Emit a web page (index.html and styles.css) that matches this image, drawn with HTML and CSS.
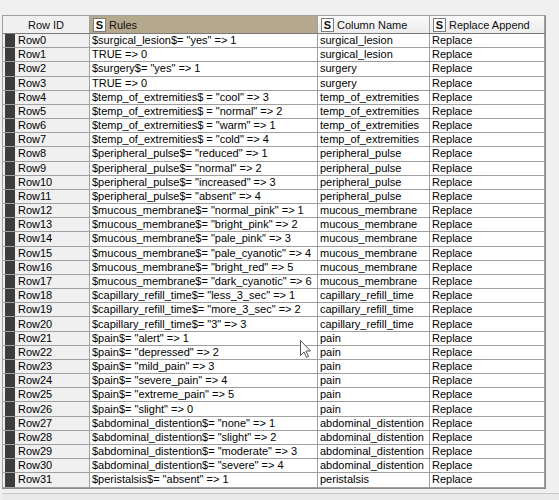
FILE: index.html
```html
<!DOCTYPE html>
<html>
<head>
<meta charset="utf-8">
<link rel="stylesheet" href="styles.css">
</head>
<body>
<div class="frame">
  <div class="table">
    <div class="row head">
      <div class="hc rowid-h">Row ID</div>
      <div class="hc sel"><span class="s">S</span>Rules</div>
      <div class="hc"><span class="s">S</span>Column Name</div>
      <div class="hc"><span class="s">S</span>Replace Append</div>
    </div>
    <div class="body">
      <div class="row"><div class="rid">Row0</div><div class="c">$surgical_lesion$= "yes" =&gt; 1</div><div class="c">surgical_lesion</div><div class="c">Replace</div></div>
      <div class="row"><div class="rid">Row1</div><div class="c">TRUE =&gt; 0</div><div class="c">surgical_lesion</div><div class="c">Replace</div></div>
      <div class="row"><div class="rid">Row2</div><div class="c">$surgery$= "yes" =&gt; 1</div><div class="c">surgery</div><div class="c">Replace</div></div>
      <div class="row"><div class="rid">Row3</div><div class="c">TRUE =&gt; 0</div><div class="c">surgery</div><div class="c">Replace</div></div>
      <div class="row"><div class="rid">Row4</div><div class="c">$temp_of_extremities$ = "cool" =&gt; 3</div><div class="c">temp_of_extremities</div><div class="c">Replace</div></div>
      <div class="row"><div class="rid">Row5</div><div class="c">$temp_of_extremities$ = "normal" =&gt; 2</div><div class="c">temp_of_extremities</div><div class="c">Replace</div></div>
      <div class="row"><div class="rid">Row6</div><div class="c">$temp_of_extremities$ = "warm" =&gt; 1</div><div class="c">temp_of_extremities</div><div class="c">Replace</div></div>
      <div class="row"><div class="rid">Row7</div><div class="c">$temp_of_extremities$ = "cold" =&gt; 4</div><div class="c">temp_of_extremities</div><div class="c">Replace</div></div>
      <div class="row"><div class="rid">Row8</div><div class="c">$peripheral_pulse$= "reduced" =&gt; 1</div><div class="c">peripheral_pulse</div><div class="c">Replace</div></div>
      <div class="row"><div class="rid">Row9</div><div class="c">$peripheral_pulse$= "normal" =&gt; 2</div><div class="c">peripheral_pulse</div><div class="c">Replace</div></div>
      <div class="row"><div class="rid">Row10</div><div class="c">$peripheral_pulse$= "increased" =&gt; 3</div><div class="c">peripheral_pulse</div><div class="c">Replace</div></div>
      <div class="row"><div class="rid">Row11</div><div class="c">$peripheral_pulse$= "absent" =&gt; 4</div><div class="c">peripheral_pulse</div><div class="c">Replace</div></div>
      <div class="row"><div class="rid">Row12</div><div class="c">$mucous_membrane$= "normal_pink" =&gt; 1</div><div class="c">mucous_membrane</div><div class="c">Replace</div></div>
      <div class="row"><div class="rid">Row13</div><div class="c">$mucous_membrane$= "bright_pink" =&gt; 2</div><div class="c">mucous_membrane</div><div class="c">Replace</div></div>
      <div class="row"><div class="rid">Row14</div><div class="c">$mucous_membrane$= "pale_pink" =&gt; 3</div><div class="c">mucous_membrane</div><div class="c">Replace</div></div>
      <div class="row"><div class="rid">Row15</div><div class="c">$mucous_membrane$= "pale_cyanotic" =&gt; 4</div><div class="c">mucous_membrane</div><div class="c">Replace</div></div>
      <div class="row"><div class="rid">Row16</div><div class="c">$mucous_membrane$= "bright_red" =&gt; 5</div><div class="c">mucous_membrane</div><div class="c">Replace</div></div>
      <div class="row"><div class="rid">Row17</div><div class="c">$mucous_membrane$= "dark_cyanotic" =&gt; 6</div><div class="c">mucous_membrane</div><div class="c">Replace</div></div>
      <div class="row"><div class="rid">Row18</div><div class="c">$capillary_refill_time$= "less_3_sec" =&gt; 1</div><div class="c">capillary_refill_time</div><div class="c">Replace</div></div>
      <div class="row"><div class="rid">Row19</div><div class="c">$capillary_refill_time$= "more_3_sec" =&gt; 2</div><div class="c">capillary_refill_time</div><div class="c">Replace</div></div>
      <div class="row"><div class="rid">Row20</div><div class="c">$capillary_refill_time$= "3" =&gt; 3</div><div class="c">capillary_refill_time</div><div class="c">Replace</div></div>
      <div class="row"><div class="rid">Row21</div><div class="c">$pain$= "alert" =&gt; 1</div><div class="c">pain</div><div class="c">Replace</div></div>
      <div class="row"><div class="rid">Row22</div><div class="c">$pain$= "depressed" =&gt; 2</div><div class="c">pain</div><div class="c">Replace</div></div>
      <div class="row"><div class="rid">Row23</div><div class="c">$pain$= "mild_pain" =&gt; 3</div><div class="c">pain</div><div class="c">Replace</div></div>
      <div class="row"><div class="rid">Row24</div><div class="c">$pain$= "severe_pain" =&gt; 4</div><div class="c">pain</div><div class="c">Replace</div></div>
      <div class="row"><div class="rid">Row25</div><div class="c">$pain$= "extreme_pain" =&gt; 5</div><div class="c">pain</div><div class="c">Replace</div></div>
      <div class="row"><div class="rid">Row26</div><div class="c">$pain$= "slight" =&gt; 0</div><div class="c">pain</div><div class="c">Replace</div></div>
      <div class="row"><div class="rid">Row27</div><div class="c">$abdominal_distention$= "none" =&gt; 1</div><div class="c">abdominal_distention</div><div class="c">Replace</div></div>
      <div class="row"><div class="rid">Row28</div><div class="c">$abdominal_distention$= "slight" =&gt; 2</div><div class="c">abdominal_distention</div><div class="c">Replace</div></div>
      <div class="row"><div class="rid">Row29</div><div class="c">$abdominal_distention$= "moderate" =&gt; 3</div><div class="c">abdominal_distention</div><div class="c">Replace</div></div>
      <div class="row"><div class="rid">Row30</div><div class="c">$abdominal_distention$= "severe" =&gt; 4</div><div class="c">abdominal_distention</div><div class="c">Replace</div></div>
      <div class="row"><div class="rid">Row31</div><div class="c">$peristalsis$= "absent" =&gt; 1</div><div class="c">peristalsis</div><div class="c">Replace</div></div>
    </div>
  </div>
  <div class="hscroll"></div>
  <svg class="cursor" width="12" height="19" viewBox="0 0 12 19"><path d="M0.5 0.5 L0.5 15.5 L4 12 L6.5 17.5 L8.5 16.5 L6 11 L10.5 11 Z" fill="#fff" stroke="#555" stroke-width="1"/></svg>
</div>
</body>
</html>
```
FILE: styles.css
```css
html, body {
  margin: 0;
  padding: 0;
  background: #f0f0f0;
}
body {
  font-family: "Liberation Sans", Tahoma, Arial, sans-serif;
  font-size: 11px;
  color: #000;
}
.frame {
  position: relative;
  width: 559px;
  height: 500px;
  padding-top: 15px;
  padding-left: 2px;
  box-sizing: border-box;
}
.table {
  width: 542px;
  border-top: 1px solid #a0a0a0;
  border-left: 1px solid #a0a0a0;
  border-right: 1px solid #8a8a8a;
  border-bottom: 1px solid #8a8a8a;
  background: #fff;
}
.row {
  display: grid;
  grid-template-columns: 87px 228px 112px 115px;
  height: 14.18px;
  line-height: 13px;
}
.head {
  height: 17px;
  line-height: 16px;
  border-bottom: 1px solid #7a7a7a;
}
.hc {
  background: linear-gradient(#fafafa, #ececec);
  border-right: 1px solid #a0a0a0;
  display: flex;
  align-items: center;
  padding-left: 3px;
  white-space: nowrap;
  overflow: hidden;
  color: #111;
}
.hc.rowid-h {
  justify-content: center;
  padding-left: 0;
  background: #f0f0f0;
}
.hc.sel {
  background: #b5a98d;
}
.s {
  display: inline-block;
  width: 11px;
  height: 12px;
  line-height: 12px;
  border: 1px solid #7c7c7c;
  background: #fff;
  font-weight: bold;
  font-size: 11px;
  text-align: center;
  margin-right: 3px;
  box-sizing: content-box;
}
.rid {
  background: #f0f0f0;
  border-right: 1px solid #a0a0a0;
  border-bottom: 1px solid #a0a0a0;
  padding-left: 15px;
  position: relative;
  box-sizing: border-box;
  display: flex;
  align-items: center;
}
.rid::before {
  content: "";
  position: absolute;
  left: 2px;
  top: 0;
  bottom: 0;
  width: 10px;
  background: #3c3c3c;
}
.c {
  border-right: 1px solid #a0a0a0;
  border-bottom: 1px solid #a0a0a0;
  padding-left: 2px;
  white-space: nowrap;
  overflow: hidden;
  box-sizing: border-box;
  display: flex;
  align-items: center;
}
.hscroll {
  margin-top: 4px;
  width: 557px;
  border-top: 1px solid #c8c8c8;
  height: 6px;
  background: #eaeaea;
}
.cursor {
  position: absolute;
  left: 300px;
  top: 340px;
}
```
